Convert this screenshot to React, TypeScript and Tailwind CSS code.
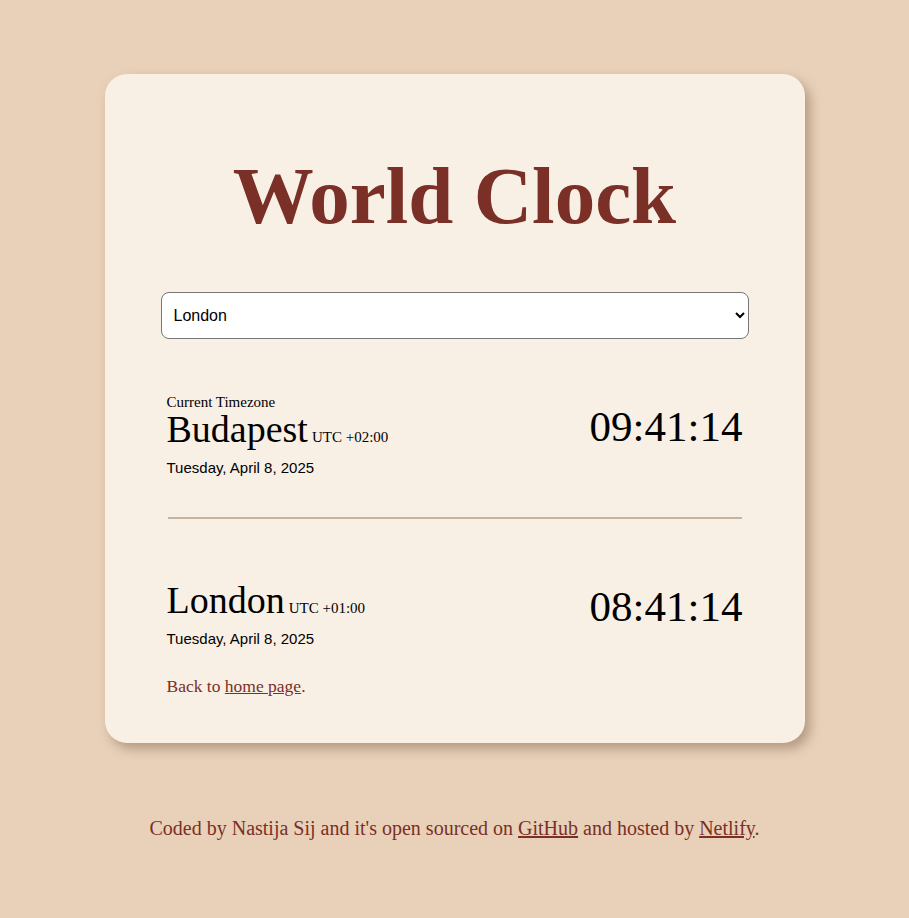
import React from 'react';

const serif = { fontFamily: '"Liberation Serif", "Times New Roman", serif' };

function CityRow({
  label,
  city,
  offset,
  date,
  time,
}: {
  label?: string;
  city: string;
  offset: string;
  date: string;
  time: string;
}) {
  return (
    <div className="flex items-center justify-between px-[6px] text-black">
      <div>
        {label && <div className="font-['Liberation_Serif',serif] text-[15px] leading-[17px]">{label}</div>}
        <h2 className="flex items-baseline font-['Liberation_Serif',serif] leading-[36px]">
          <span className="text-[38px]">{city}</span>
          <span className="ml-[4px] text-[15px]">{offset}</span>
        </h2>
        <div className="mt-[5px] font-['Liberation_Sans',Arial,sans-serif] text-[15px] leading-[15px]">{date}</div>
      </div>
      <div className="mb-[16px] font-['Liberation_Serif',serif] text-[43px] leading-none">{time}</div>
    </div>
  );
}

export default function App() {
  return (
    <div className="min-h-[918px] bg-[#e9d1b9] pt-[74px] pb-[60px]" style={serif}>
      <div className="mx-auto w-[700px] rounded-[22px] bg-[#f8efe5] px-[56px] pt-[82px] pb-[48px] shadow-[5px_6px_12px_rgba(80,50,30,0.35)]">
        <h1 className="text-center font-['Liberation_Serif',serif] text-[81px] font-bold leading-none text-[#7a2f27]">
          World Clock
        </h1>

        <select
          defaultValue="london"
          className="mt-[55px] block h-[47px] w-full rounded-lg border border-[#767676] bg-white pl-[8px] pr-[6px] font-['Liberation_Sans',Arial,sans-serif] text-[16px] text-black"
        >
          <option value="">Select a city...</option>
          <option value="london">London</option>
          <option value="paris">Paris</option>
          <option value="tokyo">Tokyo</option>
          <option value="sydney">Sydney</option>
        </select>

        <div className="mt-[55px]">
          <CityRow
            label="Current Timezone"
            city="Budapest"
            offset="UTC +02:00"
            date="Tuesday, April 8, 2025"
            time="09:41:14"
          />
        </div>

        <div className="mx-[7px] mt-[42px] h-[2px] bg-[#c6b39f]" />

        <div className="mt-[63px]">
          <CityRow city="London" offset="UTC +01:00" date="Tuesday, April 8, 2025" time="08:41:14" />
        </div>

        <p className="mt-[32px] px-[6px] font-['Liberation_Serif',serif] text-[17.5px] leading-[17px] text-[#7a2f27]">
          Back to <a href="#" className="underline">home page</a>.
        </p>
      </div>

      <footer className="mt-[76px] text-center font-['Liberation_Serif',serif] text-[20px] leading-[19px] text-[#7a2f27]">
        Coded by Nastija Sij and it's open sourced on{' '}
        <a href="#" className="underline">GitHub</a> and hosted by{' '}
        <a href="#" className="underline">Netlify</a>.
      </footer>
    </div>
  );
}
